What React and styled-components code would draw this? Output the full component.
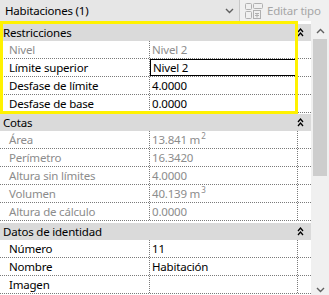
import React from "react";
import styled, { createGlobalStyle } from "styled-components";

const GlobalStyle = createGlobalStyle`
  body {
    margin: 0;
    background: #ffffff;
    font-family: "Noto Sans", "Open Sans", sans-serif;
    font-size: 11.5px;
    letter-spacing: -0.2px;
  }
`;

const groups = [
  {
    title: "Restricciones",
    rows: [
      { name: "Nivel", value: "Nivel 2", muted: true },
      { name: "Límite superior", value: "Nivel 2", editing: true },
      { name: "Desfase de límite", value: "4.0000" },
      { name: "Desfase de base", value: "0.0000" },
    ],
  },
  {
    title: "Cotas",
    rows: [
      { name: "Área", value: "13.841 m", sup: "2", muted: true },
      { name: "Perímetro", value: "16.3420", muted: true },
      { name: "Altura sin límites", value: "4.0000", muted: true },
      { name: "Volumen", value: "40.139 m", sup: "3", muted: true },
      { name: "Altura de cálculo", value: "0.0000", muted: true },
    ],
  },
  {
    title: "Datos de identidad",
    rows: [
      { name: "Número", value: "11" },
      { name: "Nombre", value: "Habitación" },
      { name: "Imagen", value: "" },
    ],
  },
];

const Panel = styled.div`
  width: 329px;
  height: 295px;
  display: flex;
  flex-direction: column;
  overflow: hidden;
  background: #ffffff;
`;

const TopBar = styled.div`
  height: 21px;
  display: flex;
  background: #f0f0f0;
`;

const TypeSelect = styled.div`
  width: 240px;
  box-sizing: border-box;
  display: flex;
  align-items: center;
  justify-content: space-between;
  padding: 0 5px 0 5px;
  background: #e6e6e6;
  border-right: 1px solid #c8c8c8;
  color: #000;
`;

const EditButton = styled.div`
  flex: 1;
  display: flex;
  align-items: center;
  gap: 4px;
  padding-left: 5px;
  color: #a6a6a6;
  white-space: nowrap;
`;

const Body = styled.div`
  flex: 1;
  display: flex;
  min-height: 0;
`;

const Grid = styled.div`
  position: relative;
  width: 311px;
  padding-top: 3px;
`;

const Highlight = styled.div`
  position: absolute;
  top: 0;
  left: 0;
  width: 298px;
  height: 93px;
  box-sizing: border-box;
  border: 3px solid #fff200;
  pointer-events: none;
`;

const GroupHeader = styled.div`
  height: 17px;
  display: flex;
  align-items: center;
  justify-content: space-between;
  padding: 0 7px 0 3px;
  margin-top: ${(p) => p.$gap || 0}px;
  background: #dadada;
  color: #000;
`;

const Row = styled.div`
  display: grid;
  grid-template-columns: 150px 148px 13px;
  height: 18px;
  box-sizing: border-box;
  border-bottom: 1px dotted #7a7a7a;
`;

const NameCell = styled.div`
  padding-left: 9px;
  display: flex;
  align-items: center;
  border-right: 1px dotted #7a7a7a;
  color: ${(p) => (p.$muted ? "#8c8c8c" : "#000")};
  white-space: nowrap;
`;

const ValueCell = styled.div`
  padding-left: 2px;
  display: flex;
  align-items: center;
  border-right: 1px dotted #7a7a7a;
  color: ${(p) => (p.$muted ? "#8c8c8c" : "#000")};
  white-space: nowrap;
  ${(p) =>
    p.$editing &&
    `
    box-shadow: inset 0 0 0 1px #000;
    padding-left: 3px;
  `}
  sup {
    font-size: 8px;
    margin-left: 1px;
    align-self: flex-start;
    line-height: 1;
    margin-top: 1px;
  }
`;

const Scrollbar = styled.div`
  width: 18px;
  background: #f0f0f0;
  display: flex;
  flex-direction: column;
  align-items: center;
  padding: 7px 0 2px;
  box-sizing: border-box;
`;

const Thumb = styled.div`
  width: 14px;
  height: 137px;
  margin-top: 5px;
  background: #cdcdcd;
`;

const ScrollSpacer = styled.div`
  flex: 1;
`;

const Chevron = ({ up, color = "#606060" }) => (
  <svg width="9" height="6" viewBox="0 0 9 6">
    <path
      d={up ? "M1 5 L4.5 1.5 L8 5" : "M1 1 L4.5 4.5 L8 1"}
      fill="none"
      stroke={color}
      strokeWidth="1.4"
    />
  </svg>
);

const Collapse = () => (
  <svg width="7" height="9" viewBox="0 0 7 9">
    <path d="M1 4 L3.5 1 L6 4 M1 8 L3.5 5 L6 8" fill="none" stroke="#000" strokeWidth="1.3" />
  </svg>
);

const EditIcon = () => (
  <svg width="18" height="16" viewBox="0 0 18 16">
    <g fill="none" stroke="#b0b0b0" strokeWidth="1">
      <rect x="0.5" y="0.5" width="6" height="6" rx="1" />
      <rect x="0.5" y="8.5" width="6" height="7" rx="1" />
      <rect x="8.5" y="0.5" width="9" height="5" rx="1" />
      <rect x="8.5" y="7.5" width="7" height="8" />
      <path d="M10 10.5 H14 M10 12.5 H14 M12 10.5 V14.5" />
    </g>
  </svg>
);

export default function App() {
  return (
    <>
      <GlobalStyle />
      <Panel>
        <TopBar>
          <TypeSelect>
            <span>Habitaciones (1)</span>
            <Chevron />
          </TypeSelect>
          <EditButton>
            <EditIcon />
            <span>Editar tipo</span>
          </EditButton>
        </TopBar>
        <Body>
          <Grid>
            {groups.map((g, i) => (
              <div key={g.title}>
                <GroupHeader $gap={i === 2 ? 2 : i === 1 ? 1 : 0}>
                  <span>{g.title}</span>
                  <Collapse />
                </GroupHeader>
                {g.rows.map((r) => (
                  <Row key={r.name}>
                    <NameCell $muted={r.muted}>{r.name}</NameCell>
                    <ValueCell $muted={r.muted} $editing={r.editing}>
                      {r.value}
                      {r.sup && <sup>{r.sup}</sup>}
                    </ValueCell>
                    <div />
                  </Row>
                ))}
              </div>
            ))}
            <Highlight />
          </Grid>
          <Scrollbar>
            <Chevron up />
            <Thumb />
            <ScrollSpacer />
            <Chevron />
          </Scrollbar>
        </Body>
      </Panel>
    </>
  );
}
